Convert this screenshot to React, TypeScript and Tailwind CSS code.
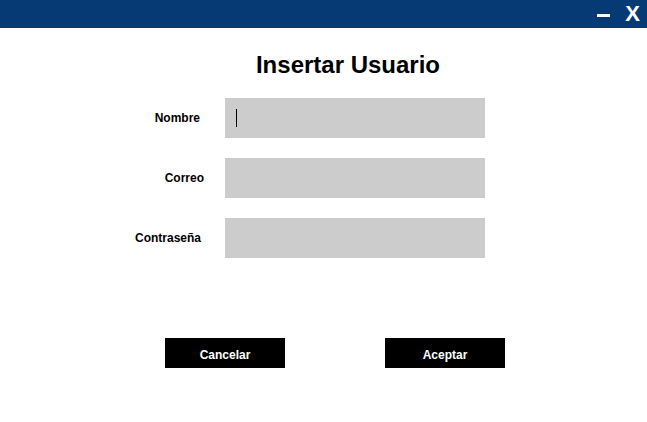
import React from 'react';

const fields = [
  { label: 'Nombre', pad: 'pr-[25px]', focused: true },
  { label: 'Correo', pad: 'pr-[21px]', focused: false },
  { label: 'Contraseña', pad: 'pr-[24px]', focused: false },
];

export default function App() {
  return (
    <div className="w-[647px] h-[422px] bg-white flex flex-col font-['Liberation_Sans',Arial,sans-serif] text-black">
      <div className="h-[28px] bg-[#063a75] flex items-center justify-end">
        <span className="w-[13px] h-[3px] bg-white mr-[15px] mt-[3px]" />
        <span className="text-white font-bold text-[22px] leading-none mr-[7px]">X</span>
      </div>

      <h1 className="mt-[23px] text-center font-bold text-[24px] leading-[28px] pl-[49px]">Insertar Usuario</h1>

      <div className="mt-[19px] flex flex-col gap-[20px]">
        {fields.map((f) => (
          <div key={f.label} className="flex items-center">
            <div className={`w-[225px] text-right text-[12px] font-bold ${f.pad}`}>{f.label}</div>
            <div className="w-[260px] h-[40px] bg-[#cccccc] flex items-center pl-[11px]">
              {f.focused && <span className="w-px h-[18px] bg-black" />}
            </div>
          </div>
        ))}
      </div>

      <div className="mt-[80px] flex pl-[165px] gap-[100px]">
        <button className="w-[120px] h-[30px] bg-black text-white text-[12px] font-bold pt-[3px]">Cancelar</button>
        <button className="w-[120px] h-[30px] bg-black text-white text-[12px] font-bold pt-[3px]">Aceptar</button>
      </div>
    </div>
  );
}
